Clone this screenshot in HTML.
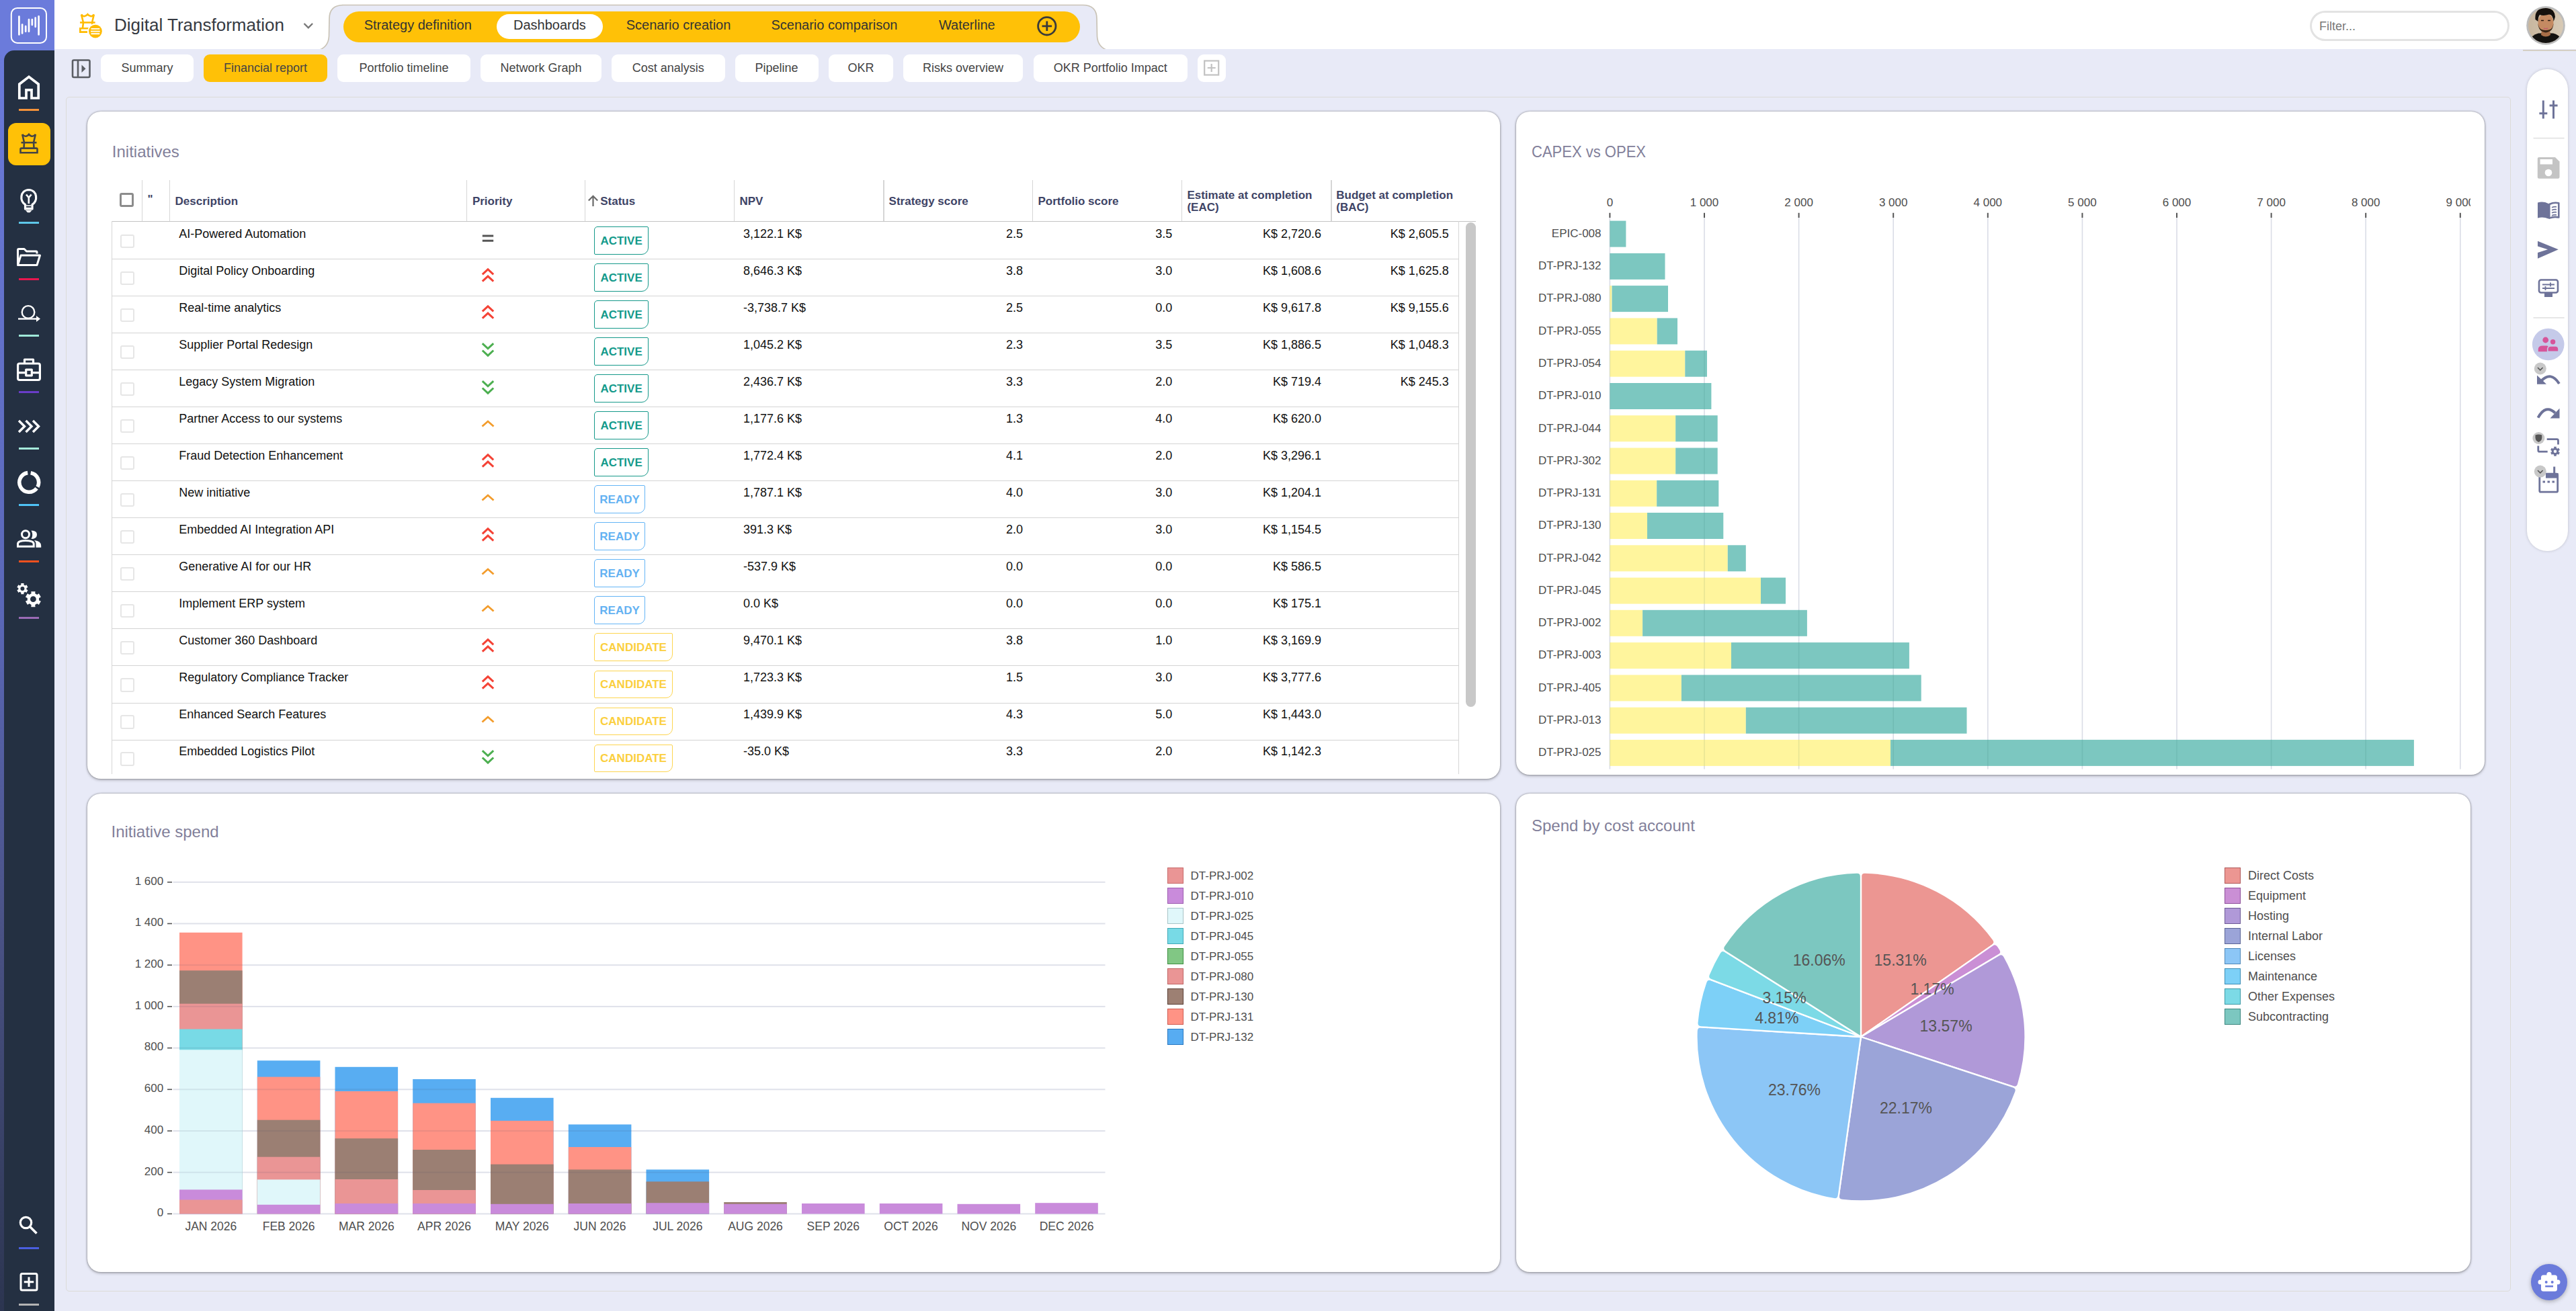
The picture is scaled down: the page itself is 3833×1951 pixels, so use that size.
<!DOCTYPE html><html><head><meta charset="utf-8"><style>
*{box-sizing:border-box;margin:0;padding:0}
html,body{width:3833px;height:1951px}
body{background:#e8eaf7;font-family:"Liberation Sans",sans-serif;color:#333}
#root{position:relative;width:3833px;height:1951px;overflow:hidden;background:#e8eaf7}
.a{position:absolute}
.t{position:absolute;white-space:nowrap;line-height:1}
.panel{position:absolute;background:#fff;border-radius:20px;box-shadow:0 0 3px rgba(0,0,0,.42),0 2px 4px rgba(0,0,0,.22)}
svg{position:absolute;overflow:visible}
</style></head><body><div id="root"><div class="a" style="left:81.0px;top:0.0px;width:3752.0px;height:73.0px;background:#fff"></div>
<svg style="left:0;top:0" width="3833" height="80"><path d="M476,74 C486,70 489,62 489.5,54 L490,28 Q490,7.5 511,7.5 L1611,7.5 Q1632,7.5 1632,28 L1632.5,54 C1633,62 1636,70 1646,74 Z" fill="#e8eaf7" stroke="#c9c3b6" stroke-width="1.7"/><rect x="470" y="73" width="1180" height="6" fill="#e8eaf7"/></svg>
<div class="a" style="left:510.6px;top:17.0px;width:1096.4px;height:45.5px;background:#ffc107;border-radius:23px"></div>
<div class="a" style="left:738.7px;top:21.2px;width:158.3px;height:36.8px;background:#fff;border-radius:18.5px"></div>
<div class="t" style="left:541.7px;top:27.3px;font-size:20px;color:#333;font-weight:400;">Strategy definition</div>
<div class="t" style="left:764.0px;top:27.3px;font-size:20px;color:#333;font-weight:400;">Dashboards</div>
<div class="t" style="left:931.7px;top:27.3px;font-size:20px;color:#333;font-weight:400;">Scenario creation</div>
<div class="t" style="left:1147.5px;top:27.3px;font-size:20px;color:#333;font-weight:400;">Scenario comparison</div>
<div class="t" style="left:1396.9px;top:27.3px;font-size:20px;color:#333;font-weight:400;">Waterline</div>
<svg style="left:1540px;top:21px" width="36" height="36"><circle cx="17.8" cy="17.8" r="13.2" fill="none" stroke="#3a3a3a" stroke-width="2.8"/><path d="M17.8,10.5V25.1M10.5,17.8H25.1" stroke="#3a3a3a" stroke-width="2.8"/></svg>
<svg style="left:110px;top:15px" width="50" height="50"><g fill="none" stroke="#ffbb00" stroke-width="2.6"><path d="M11,6.6 Q13.5,10 16,9 Q19,8.2 20.4,6.4 Q21.8,8.2 24.8,9 Q27.3,10 29.8,6.6 L27,18.5 L27.8,25"/><path d="M11,6.6 L14,18.5 L13,26.5"/><path d="M9,18.5 H31.6"/><path d="M22,27.3 H9.3 V32.6 H20"/></g><circle cx="31.9" cy="31.6" r="11.6" fill="#fff"/><circle cx="31.9" cy="31.6" r="9.9" fill="#ffbb00"/><path d="M25.5,27.9H38.3M25,31.6H38.8M25.5,35.3H38.3" stroke="#fff" stroke-width="1.9"/></svg>
<div class="t" style="left:170.0px;top:23.6px;font-size:26px;color:#363a42;font-weight:400;">Digital Transformation</div>
<svg style="left:448px;top:30px" width="22" height="16"><path d="M4.5,5 L10.8,11.3 L17.1,5" fill="none" stroke="#777" stroke-width="2.4"/></svg>
<div class="a" style="left:3436.5px;top:16.0px;width:297.9px;height:44.6px;background:#fff;border:3px solid #e3e3e3;border-radius:23px"></div>
<div class="t" style="left:3451.0px;top:29.8px;font-size:18px;color:#777;font-weight:400;">Filter...</div>
<svg style="left:3755px;top:5px" width="66" height="66"><defs><clipPath id="avc"><circle cx="33" cy="33" r="26"/></clipPath><linearGradient id="avg" x1="0" x2="1"><stop offset="0" stop-color="#c6b49c"/><stop offset="1" stop-color="#d9ccb8"/></linearGradient></defs><circle cx="33" cy="33" r="28.8" fill="#bcbcbc"/><g clip-path="url(#avc)"><rect x="0" y="0" width="66" height="66" fill="url(#avg)"/><path d="M4,66 Q8,48 22,44.5 L44,44.5 Q58,48 62,66 Z" fill="#141210"/><path d="M27,40 H39 L40,47 Q33,52 26,47Z" fill="#a86e48"/><ellipse cx="33" cy="29" rx="11.5" ry="14" fill="#c48a62"/><path d="M21.5,30 Q22,42 33,43.5 Q44,42 44.5,30 Q43,38 39,39 Q33,41 27,39 Q23,38 21.5,30Z" fill="#3a2618"/><path d="M17.5,24 Q16,8 31,6.8 Q46,6 47,20 Q46,24 44.5,27 Q44,17 38,16.5 Q30,19 24,17 Q21.5,20 21.5,27 Z" fill="#16110d"/><path d="M26,25.5 H30 M36,25.5 H40" stroke="#2a1a10" stroke-width="1.4"/><path d="M30,37 Q33,38.5 36,37" stroke="#c0606a" stroke-width="1.6" fill="none"/></g></svg>
<div class="a" style="left:3753.5px;top:74.0px;width:79.5px;height:1.5px;background:#d5cfc4"></div>
<svg style="left:105px;top:86px" width="32" height="32"><rect x="3" y="3.5" width="25.5" height="25.5" rx="2" fill="none" stroke="#5b5e64" stroke-width="2.6"/><path d="M11,3.5V29" stroke="#5b5e64" stroke-width="2.6"/><path d="M16.5,10.5 L22.5,16.2 L16.5,22Z" fill="#5b5e64"/></svg>
<div class="a" style="left:150.0px;top:80.5px;width:138.0px;height:41.8px;background:#fff;border-radius:9px"></div>
<div class="t" style="left:-281.0px;width:1000px;text-align:center;top:92.0px;font-size:18px;color:#444;font-weight:400;">Summary</div>
<div class="a" style="left:303.0px;top:80.5px;width:184.0px;height:41.8px;background:#ffc107;border-radius:9px"></div>
<div class="t" style="left:-105.0px;width:1000px;text-align:center;top:92.0px;font-size:18px;color:#444;font-weight:400;">Financial report</div>
<div class="a" style="left:502.0px;top:80.5px;width:198.0px;height:41.8px;background:#fff;border-radius:9px"></div>
<div class="t" style="left:101.0px;width:1000px;text-align:center;top:92.0px;font-size:18px;color:#444;font-weight:400;">Portfolio timeline</div>
<div class="a" style="left:715.0px;top:80.5px;width:180.0px;height:41.8px;background:#fff;border-radius:9px"></div>
<div class="t" style="left:305.0px;width:1000px;text-align:center;top:92.0px;font-size:18px;color:#444;font-weight:400;">Network Graph</div>
<div class="a" style="left:910.0px;top:80.5px;width:168.6px;height:41.8px;background:#fff;border-radius:9px"></div>
<div class="t" style="left:494.3px;width:1000px;text-align:center;top:92.0px;font-size:18px;color:#444;font-weight:400;">Cost analysis</div>
<div class="a" style="left:1093.5px;top:80.5px;width:124.2px;height:41.8px;background:#fff;border-radius:9px"></div>
<div class="t" style="left:655.6px;width:1000px;text-align:center;top:92.0px;font-size:18px;color:#444;font-weight:400;">Pipeline</div>
<div class="a" style="left:1233.0px;top:80.5px;width:96.0px;height:41.8px;background:#fff;border-radius:9px"></div>
<div class="t" style="left:781.0px;width:1000px;text-align:center;top:92.0px;font-size:18px;color:#444;font-weight:400;">OKR</div>
<div class="a" style="left:1344.0px;top:80.5px;width:178.0px;height:41.8px;background:#fff;border-radius:9px"></div>
<div class="t" style="left:933.0px;width:1000px;text-align:center;top:92.0px;font-size:18px;color:#444;font-weight:400;">Risks overview</div>
<div class="a" style="left:1537.5px;top:80.5px;width:229.5px;height:41.8px;background:#fff;border-radius:9px"></div>
<div class="t" style="left:1152.2px;width:1000px;text-align:center;top:92.0px;font-size:18px;color:#444;font-weight:400;">OKR Portfolio Impact</div>
<div class="a" style="left:1782.0px;top:80.5px;width:42.0px;height:41.8px;background:#fff;border-radius:9px"></div>
<svg style="left:1788px;top:86px" width="30" height="30"><rect x="4.2" y="4.5" width="21" height="21" fill="none" stroke="#c2c2c2" stroke-width="2.2"/><path d="M14.7,9V21M8.7,15H20.7" stroke="#c2c2c2" stroke-width="2.2"/></svg>
<div class="a" style="left:97.5px;top:144.0px;width:3638.5px;height:1778.0px;border:1.5px solid #dcdbd8;border-radius:5px"></div>
<div class="a" style="left:0.0px;top:0.0px;width:81.0px;height:95.0px;background:#6b7bdb"></div>
<div class="a" style="left:0.0px;top:75.0px;width:30.0px;height:1876.0px;background:linear-gradient(#6b7bdb 0%,#5b68b8 44%,#4a5285 70%,#2c3550 100%)"></div>
<div class="a" style="left:6.0px;top:75.0px;width:75.0px;height:1876.0px;background:#243042;border-top-left-radius:15px"></div>
<svg style="left:0;top:0" width="81" height="75"><rect x="16.8" y="11.9" width="52.2" height="52" rx="9" fill="none" stroke="#fff" stroke-width="2"/><g stroke="#fff" stroke-width="2.7" stroke-linecap="round"><path d="M28.4,24.5V51.5M33.1,36.5V49.5M38.2,39V46.8M43,29V46.8M47.8,29V37M52.7,26.5V39.8M57.6,24.3V51.5"/></g></svg>
<div class="a" style="left:11.9px;top:182.9px;width:63.4px;height:62.8px;background:#ffc107;border-radius:12px"></div>
<svg style="left:0;top:0" width="81" height="1951"><path d="M28.8,146 V125.2 L43,114.3 L57.2,125.2 V146 H47 V133.8 H39 V146 Z" fill="none" stroke="#fff" stroke-width="3.7" stroke-linejoin="miter"/><g fill="none" stroke="#444" stroke-width="2.6"><path d="M33.2,200 Q36,203.5 39.5,202.5 Q42,201.5 43,200 Q44,201.5 46.5,202.5 Q50,203.5 52.8,200 L50,212 L50.5,220"/><path d="M33.2,200 L36,212 L35.5,220"/><path d="M31.5,212.2 H54.5"/><path d="M30.5,227.2 V222 Q30.5,220.6 32,220.6 H54 Q55.5,220.6 55.5,222 V227.2 Z"/></g><g fill="none" stroke="#fff" stroke-width="3.2"><path d="M37.5,304.5 C29,300 29.5,283 42.8,282.5 C56,283 56.5,300 48,304.5 V311 H37.5 Z" stroke-linejoin="round"/><path d="M39,289.5 L42.8,294 L46.6,289.5 M42.8,294 V303" stroke-width="2.6"/><path d="M39,306H46.5M39,309.5H46.5" stroke-width="1.6"/></g><path d="M38,313 H47.5 L44.5,316.3 H41 Z" fill="#fff"/><g fill="none" stroke="#fff" stroke-width="3" stroke-linejoin="round"><path d="M26.5,393.5 V372 Q26.5,370.5 28,370.5 H36 L39.5,374 H53.5 Q55,374 55,375.5 V377.5"/><path d="M26.5,394.5 L31,380 H59.5 L55,394.5 Z"/></g><g fill="none" stroke="#fff" stroke-width="2.4"><circle cx="42" cy="464.4" r="9.3"/><path d="M27,474.5 H56"/></g><path d="M54,470 L60,474.5 L54,479 Z" fill="#fff"/><g fill="none" stroke="#fff" stroke-width="3.2" stroke-linejoin="round"><rect x="26.6" y="541" width="32.8" height="24.5" rx="2.5"/><path d="M36.5,540.5 V535 H49.5 V540.5"/><path d="M26.6,554.7 H37.8 M48.3,554.7 H59.4"/><rect x="38.7" y="550.2" width="8.6" height="8.6"/></g><g fill="none" stroke="#fff" stroke-width="3.4"><path d="M28,626 L36.5,634.5 L28,643"/><path d="M38.5,626 L47,634.5 L38.5,643"/><path d="M49,626 L57.5,634.5 L49,643"/></g><path d="M45.70,703.72 A14.4,14.4 0 0,1 55.91,724.66" fill="none" stroke="#fff" stroke-width="5.6"/><path d="M54.55,726.77 A14.4,14.4 0 1,1 41.20,703.64" fill="none" stroke="#fff" stroke-width="5.6"/><g fill="none" stroke="#fff" stroke-width="3"><circle cx="38" cy="795.2" r="5.5"/><path d="M26.5,813.2 V809.5 Q26.5,804.5 38,804.5 Q50.2,804.5 50.2,809.5 V813.2 Z"/></g><path d="M46.5,789.5 Q55.5,789.5 55,796 Q54.5,802 46.5,802 Q50,796 46.5,789.5Z" fill="#fff"/><path d="M51,804 Q61,805 61.2,812 V814.7 H53.5 V810 Q53.5,806 51,804Z" fill="#fff"/><path d="M39.48,877.31 L41.51,878.27 L39.34,882.04 L37.49,880.76 L35.39,881.97 L35.57,884.21 L31.23,884.21 L31.41,881.97 L29.31,880.76 L27.46,882.04 L25.29,878.27 L27.32,877.31 L27.32,874.89 L25.29,873.93 L27.46,870.16 L29.31,871.44 L31.41,870.23 L31.23,867.99 L35.57,867.99 L35.39,870.23 L37.49,871.44 L39.34,870.16 L41.51,873.93 L39.48,874.89ZM36.40,876.10 A3.0,3.0 0 1,0 30.40,876.10 A3.0,3.0 0 1,0 36.40,876.10Z" fill="#fff" fill-rule="evenodd"/><path d="M58.03,893.42 L60.89,894.78 L57.81,900.11 L55.20,898.32 L52.23,900.03 L52.48,903.19 L46.32,903.19 L46.57,900.03 L43.60,898.32 L40.99,900.11 L37.91,894.78 L40.77,893.42 L40.77,889.98 L37.91,888.62 L40.99,883.29 L43.60,885.08 L46.57,883.37 L46.32,880.21 L52.48,880.21 L52.23,883.37 L55.20,885.08 L57.81,883.29 L60.89,888.62 L58.03,889.98ZM53.80,891.70 A4.4,4.4 0 1,0 45.00,891.70 A4.4,4.4 0 1,0 53.80,891.70Z" fill="#fff" fill-rule="evenodd"/><g fill="none" stroke="#fff" stroke-width="3.2"><circle cx="38.5" cy="1819.5" r="8.2"/><path d="M44.5,1825.5 L54.5,1835.5" stroke-width="3.6"/></g><g fill="none" stroke="#fff" stroke-width="3"><rect x="31" y="1895.5" width="24" height="24.5" rx="2"/><path d="M43,1900.5V1915M35.8,1907.8H50.2"/></g></svg>
<div class="a" style="left:28.0px;top:162.0px;width:30.2px;height:3.0px;background:#f5923a"></div>
<div class="a" style="left:28.0px;top:330.0px;width:30.2px;height:3.0px;background:#5ec6e8"></div>
<div class="a" style="left:28.0px;top:414.0px;width:30.2px;height:3.0px;background:#e8174f"></div>
<div class="a" style="left:28.0px;top:498.0px;width:30.2px;height:3.0px;background:#9fe8d8"></div>
<div class="a" style="left:28.0px;top:582.0px;width:30.2px;height:3.0px;background:#6a3dc8"></div>
<div class="a" style="left:28.0px;top:666.0px;width:30.2px;height:3.0px;background:#a5eadb"></div>
<div class="a" style="left:28.0px;top:750.0px;width:30.2px;height:3.0px;background:#4fc3f7"></div>
<div class="a" style="left:28.0px;top:834.0px;width:30.2px;height:3.0px;background:#f4511e"></div>
<div class="a" style="left:28.0px;top:918.0px;width:30.2px;height:3.0px;background:#9b6bb5"></div>
<div class="a" style="left:28.0px;top:1856.0px;width:30.2px;height:3.0px;background:#4a5fe0"></div>
<div class="a" style="left:28.0px;top:1940.0px;width:30.2px;height:3.0px;background:#b4b4b4"></div>
<div class="panel" style="left:130.3px;top:166px;width:2102px;height:993px"></div>
<div class="t" style="left:166.8px;top:213.6px;font-size:24px;color:#82809a;font-weight:400;">Initiatives</div>
<div class="a" style="left:210.6px;top:268.0px;width:1.5px;height:61.4px;background:#d6d6d6"></div>
<div class="a" style="left:251.8px;top:268.0px;width:1.5px;height:61.4px;background:#d6d6d6"></div>
<div class="a" style="left:693.6px;top:268.0px;width:1.5px;height:61.4px;background:#d6d6d6"></div>
<div class="a" style="left:869.9px;top:268.0px;width:1.5px;height:61.4px;background:#d6d6d6"></div>
<div class="a" style="left:1091.7px;top:268.0px;width:1.5px;height:61.4px;background:#d6d6d6"></div>
<div class="a" style="left:1314.0px;top:268.0px;width:1.5px;height:61.4px;background:#d6d6d6"></div>
<div class="a" style="left:1535.8px;top:268.0px;width:1.5px;height:61.4px;background:#d6d6d6"></div>
<div class="a" style="left:1757.7px;top:268.0px;width:1.5px;height:61.4px;background:#d6d6d6"></div>
<div class="a" style="left:1980.0px;top:268.0px;width:1.5px;height:61.4px;background:#d6d6d6"></div>
<div class="a" style="left:166.5px;top:329.0px;width:2029.5px;height:1.2px;background:#c4c4c4"></div>
<div class="a" style="left:178.0px;top:287.0px;width:21.0px;height:21.0px;border:3px solid #8c8c8c;border-radius:3px"></div>
<div class="t" style="left:219.5px;top:288.1px;font-size:17px;color:#3e4466;font-weight:700;">"</div>
<div class="t" style="left:260.6px;top:290.8px;font-size:17px;color:#3e4466;font-weight:700;">Description</div>
<div class="t" style="left:702.9px;top:290.8px;font-size:17px;color:#3e4466;font-weight:700;">Priority</div>
<svg style="left:872px;top:288px" width="22" height="22"><path d="M10.5,19V3.8M3.8,10.5L10.5,3.8L17.2,10.5" fill="none" stroke="#6a6a6a" stroke-width="2.2"/></svg>
<div class="t" style="left:893.2px;top:290.8px;font-size:17px;color:#3e4466;font-weight:700;">Status</div>
<div class="t" style="left:1100.4px;top:290.8px;font-size:17px;color:#3e4466;font-weight:700;">NPV</div>
<div class="t" style="left:1322.6px;top:290.8px;font-size:17px;color:#3e4466;font-weight:700;">Strategy score</div>
<div class="t" style="left:1544.5px;top:290.8px;font-size:17px;color:#3e4466;font-weight:700;">Portfolio score</div>
<div class="t" style="left:1766.4px;top:282.0px;font-size:17px;color:#3e4466;font-weight:700;">Estimate at completion</div>
<div class="t" style="left:1766.4px;top:300.0px;font-size:17px;color:#3e4466;font-weight:700;">(EAC)</div>
<div class="t" style="left:1988.3px;top:282.0px;font-size:17px;color:#3e4466;font-weight:700;">Budget at completion</div>
<div class="t" style="left:1988.3px;top:300.0px;font-size:17px;color:#3e4466;font-weight:700;">(BAC)</div>
<div class="a" style="left:165.8px;top:329.4px;width:1.5px;height:822.2px;background:#d6d6d6"></div>
<div class="a" style="left:2169.8px;top:329.4px;width:1.5px;height:822.2px;background:#d6d6d6"></div>
<div class="a" style="left:166.5px;top:330.4px;width:2004px;height:821px;overflow:hidden">
<div class="a" style="left:0;top:54.6px;width:2004px;height:1px;background:#d4d4d4"></div>
<div class="a" style="left:12.5px;top:18.4px;width:20.5px;height:20.2px;border:2.5px solid #e6e6e6;border-radius:3px"></div>
<div class="t" style="left:99.7px;top:8.4px;font-size:18px;color:#111;font-weight:400;">AI-Powered Automation</div>
<svg style="left:549.5px;top:14.0px" width="20" height="20"><path d="M1.8,7H18.2M1.8,14.2H18.2" stroke="#555" stroke-width="3"/></svg>
<div class="a" style="left:717.5px;top:6.6px;width:81.3px;height:41.8px;border:1.8px solid #15998a;border-radius:5px 2px 10px 2px"></div>
<div class="t" style="left:258.1px;width:1000px;text-align:center;top:19.4px;font-size:17px;color:#139a8b;font-weight:700;">ACTIVE</div>
<div class="t" style="left:939.5px;top:8.4px;font-size:18px;color:#111;font-weight:400;">3,122.1 K$</div>
<div class="t" style="left:355.5px;width:1000px;text-align:right;top:8.4px;font-size:18px;color:#111;font-weight:400;">2.5</div>
<div class="t" style="left:577.7px;width:1000px;text-align:right;top:8.4px;font-size:18px;color:#111;font-weight:400;">3.5</div>
<div class="t" style="left:799.5px;width:1000px;text-align:right;top:8.4px;font-size:18px;color:#111;font-weight:400;">K$ 2,720.6</div>
<div class="t" style="left:989.3px;width:1000px;text-align:right;top:8.4px;font-size:18px;color:#111;font-weight:400;">K$ 2,605.5</div>
<div class="a" style="left:0;top:109.6px;width:2004px;height:1px;background:#d4d4d4"></div>
<div class="a" style="left:12.5px;top:73.4px;width:20.5px;height:20.2px;border:2.5px solid #e6e6e6;border-radius:3px"></div>
<div class="t" style="left:99.7px;top:63.4px;font-size:18px;color:#111;font-weight:400;">Digital Policy Onboarding</div>
<svg style="left:549.5px;top:69.1px" width="20" height="24"><path d="M1.8,9.4L10,1.8L18.2,9.4M1.8,19.7L10,12.1L18.2,19.7" fill="none" stroke="#f44336" stroke-width="3"/></svg>
<div class="a" style="left:717.5px;top:61.7px;width:81.3px;height:41.8px;border:1.8px solid #15998a;border-radius:5px 2px 10px 2px"></div>
<div class="t" style="left:258.1px;width:1000px;text-align:center;top:74.5px;font-size:17px;color:#139a8b;font-weight:700;">ACTIVE</div>
<div class="t" style="left:939.5px;top:63.4px;font-size:18px;color:#111;font-weight:400;">8,646.3 K$</div>
<div class="t" style="left:355.5px;width:1000px;text-align:right;top:63.4px;font-size:18px;color:#111;font-weight:400;">3.8</div>
<div class="t" style="left:577.7px;width:1000px;text-align:right;top:63.4px;font-size:18px;color:#111;font-weight:400;">3.0</div>
<div class="t" style="left:799.5px;width:1000px;text-align:right;top:63.4px;font-size:18px;color:#111;font-weight:400;">K$ 1,608.6</div>
<div class="t" style="left:989.3px;width:1000px;text-align:right;top:63.4px;font-size:18px;color:#111;font-weight:400;">K$ 1,625.8</div>
<div class="a" style="left:0;top:164.6px;width:2004px;height:1px;background:#d4d4d4"></div>
<div class="a" style="left:12.5px;top:128.5px;width:20.5px;height:20.2px;border:2.5px solid #e6e6e6;border-radius:3px"></div>
<div class="t" style="left:99.7px;top:118.5px;font-size:18px;color:#111;font-weight:400;">Real-time analytics</div>
<svg style="left:549.5px;top:124.1px" width="20" height="24"><path d="M1.8,9.4L10,1.8L18.2,9.4M1.8,19.7L10,12.1L18.2,19.7" fill="none" stroke="#f44336" stroke-width="3"/></svg>
<div class="a" style="left:717.5px;top:116.7px;width:81.3px;height:41.8px;border:1.8px solid #15998a;border-radius:5px 2px 10px 2px"></div>
<div class="t" style="left:258.1px;width:1000px;text-align:center;top:129.5px;font-size:17px;color:#139a8b;font-weight:700;">ACTIVE</div>
<div class="t" style="left:939.5px;top:118.5px;font-size:18px;color:#111;font-weight:400;">-3,738.7 K$</div>
<div class="t" style="left:355.5px;width:1000px;text-align:right;top:118.5px;font-size:18px;color:#111;font-weight:400;">2.5</div>
<div class="t" style="left:577.7px;width:1000px;text-align:right;top:118.5px;font-size:18px;color:#111;font-weight:400;">0.0</div>
<div class="t" style="left:799.5px;width:1000px;text-align:right;top:118.5px;font-size:18px;color:#111;font-weight:400;">K$ 9,617.8</div>
<div class="t" style="left:989.3px;width:1000px;text-align:right;top:118.5px;font-size:18px;color:#111;font-weight:400;">K$ 9,155.6</div>
<div class="a" style="left:0;top:219.6px;width:2004px;height:1px;background:#d4d4d4"></div>
<div class="a" style="left:12.5px;top:183.5px;width:20.5px;height:20.2px;border:2.5px solid #e6e6e6;border-radius:3px"></div>
<div class="t" style="left:99.7px;top:173.5px;font-size:18px;color:#111;font-weight:400;">Supplier Portal Redesign</div>
<svg style="left:549.5px;top:179.1px" width="20" height="24"><path d="M1.8,2.2L10,9.8L18.2,2.2M1.8,12.5L10,20.1L18.2,12.5" fill="none" stroke="#4caf50" stroke-width="3"/></svg>
<div class="a" style="left:717.5px;top:171.8px;width:81.3px;height:41.8px;border:1.8px solid #15998a;border-radius:5px 2px 10px 2px"></div>
<div class="t" style="left:258.1px;width:1000px;text-align:center;top:184.6px;font-size:17px;color:#139a8b;font-weight:700;">ACTIVE</div>
<div class="t" style="left:939.5px;top:173.5px;font-size:18px;color:#111;font-weight:400;">1,045.2 K$</div>
<div class="t" style="left:355.5px;width:1000px;text-align:right;top:173.5px;font-size:18px;color:#111;font-weight:400;">2.3</div>
<div class="t" style="left:577.7px;width:1000px;text-align:right;top:173.5px;font-size:18px;color:#111;font-weight:400;">3.5</div>
<div class="t" style="left:799.5px;width:1000px;text-align:right;top:173.5px;font-size:18px;color:#111;font-weight:400;">K$ 1,886.5</div>
<div class="t" style="left:989.3px;width:1000px;text-align:right;top:173.5px;font-size:18px;color:#111;font-weight:400;">K$ 1,048.3</div>
<div class="a" style="left:0;top:274.6px;width:2004px;height:1px;background:#d4d4d4"></div>
<div class="a" style="left:12.5px;top:238.6px;width:20.5px;height:20.2px;border:2.5px solid #e6e6e6;border-radius:3px"></div>
<div class="t" style="left:99.7px;top:228.6px;font-size:18px;color:#111;font-weight:400;">Legacy System Migration</div>
<svg style="left:549.5px;top:234.2px" width="20" height="24"><path d="M1.8,2.2L10,9.8L18.2,2.2M1.8,12.5L10,20.1L18.2,12.5" fill="none" stroke="#4caf50" stroke-width="3"/></svg>
<div class="a" style="left:717.5px;top:226.8px;width:81.3px;height:41.8px;border:1.8px solid #15998a;border-radius:5px 2px 10px 2px"></div>
<div class="t" style="left:258.1px;width:1000px;text-align:center;top:239.6px;font-size:17px;color:#139a8b;font-weight:700;">ACTIVE</div>
<div class="t" style="left:939.5px;top:228.6px;font-size:18px;color:#111;font-weight:400;">2,436.7 K$</div>
<div class="t" style="left:355.5px;width:1000px;text-align:right;top:228.6px;font-size:18px;color:#111;font-weight:400;">3.3</div>
<div class="t" style="left:577.7px;width:1000px;text-align:right;top:228.6px;font-size:18px;color:#111;font-weight:400;">2.0</div>
<div class="t" style="left:799.5px;width:1000px;text-align:right;top:228.6px;font-size:18px;color:#111;font-weight:400;">K$ 719.4</div>
<div class="t" style="left:989.3px;width:1000px;text-align:right;top:228.6px;font-size:18px;color:#111;font-weight:400;">K$ 245.3</div>
<div class="a" style="left:0;top:329.6px;width:2004px;height:1px;background:#d4d4d4"></div>
<div class="a" style="left:12.5px;top:293.6px;width:20.5px;height:20.2px;border:2.5px solid #e6e6e6;border-radius:3px"></div>
<div class="t" style="left:99.7px;top:283.6px;font-size:18px;color:#111;font-weight:400;">Partner Access to our systems</div>
<svg style="left:549.5px;top:289.2px" width="20" height="24"><path d="M1.5,14.5L10,7L18.5,14.5" fill="none" stroke="#f39c2b" stroke-width="2.8"/></svg>
<div class="a" style="left:717.5px;top:281.9px;width:81.3px;height:41.8px;border:1.8px solid #15998a;border-radius:5px 2px 10px 2px"></div>
<div class="t" style="left:258.1px;width:1000px;text-align:center;top:294.7px;font-size:17px;color:#139a8b;font-weight:700;">ACTIVE</div>
<div class="t" style="left:939.5px;top:283.6px;font-size:18px;color:#111;font-weight:400;">1,177.6 K$</div>
<div class="t" style="left:355.5px;width:1000px;text-align:right;top:283.6px;font-size:18px;color:#111;font-weight:400;">1.3</div>
<div class="t" style="left:577.7px;width:1000px;text-align:right;top:283.6px;font-size:18px;color:#111;font-weight:400;">4.0</div>
<div class="t" style="left:799.5px;width:1000px;text-align:right;top:283.6px;font-size:18px;color:#111;font-weight:400;">K$ 620.0</div>
<div class="a" style="left:0;top:384.6px;width:2004px;height:1px;background:#d4d4d4"></div>
<div class="a" style="left:12.5px;top:348.7px;width:20.5px;height:20.2px;border:2.5px solid #e6e6e6;border-radius:3px"></div>
<div class="t" style="left:99.7px;top:338.7px;font-size:18px;color:#111;font-weight:400;">Fraud Detection Enhancement</div>
<svg style="left:549.5px;top:344.3px" width="20" height="24"><path d="M1.8,9.4L10,1.8L18.2,9.4M1.8,19.7L10,12.1L18.2,19.7" fill="none" stroke="#f44336" stroke-width="3"/></svg>
<div class="a" style="left:717.5px;top:336.9px;width:81.3px;height:41.8px;border:1.8px solid #15998a;border-radius:5px 2px 10px 2px"></div>
<div class="t" style="left:258.1px;width:1000px;text-align:center;top:349.7px;font-size:17px;color:#139a8b;font-weight:700;">ACTIVE</div>
<div class="t" style="left:939.5px;top:338.7px;font-size:18px;color:#111;font-weight:400;">1,772.4 K$</div>
<div class="t" style="left:355.5px;width:1000px;text-align:right;top:338.7px;font-size:18px;color:#111;font-weight:400;">4.1</div>
<div class="t" style="left:577.7px;width:1000px;text-align:right;top:338.7px;font-size:18px;color:#111;font-weight:400;">2.0</div>
<div class="t" style="left:799.5px;width:1000px;text-align:right;top:338.7px;font-size:18px;color:#111;font-weight:400;">K$ 3,296.1</div>
<div class="a" style="left:0;top:439.6px;width:2004px;height:1px;background:#d4d4d4"></div>
<div class="a" style="left:12.5px;top:403.8px;width:20.5px;height:20.2px;border:2.5px solid #e6e6e6;border-radius:3px"></div>
<div class="t" style="left:99.7px;top:393.7px;font-size:18px;color:#111;font-weight:400;">New initiative</div>
<svg style="left:549.5px;top:399.4px" width="20" height="24"><path d="M1.5,14.5L10,7L18.5,14.5" fill="none" stroke="#f39c2b" stroke-width="2.8"/></svg>
<div class="a" style="left:717.5px;top:392.0px;width:76.2px;height:41.8px;border:1.8px solid #64b5f6;border-radius:5px 2px 10px 2px"></div>
<div class="t" style="left:255.6px;width:1000px;text-align:center;top:404.8px;font-size:17px;color:#64b2f2;font-weight:700;">READY</div>
<div class="t" style="left:939.5px;top:393.7px;font-size:18px;color:#111;font-weight:400;">1,787.1 K$</div>
<div class="t" style="left:355.5px;width:1000px;text-align:right;top:393.7px;font-size:18px;color:#111;font-weight:400;">4.0</div>
<div class="t" style="left:577.7px;width:1000px;text-align:right;top:393.7px;font-size:18px;color:#111;font-weight:400;">3.0</div>
<div class="t" style="left:799.5px;width:1000px;text-align:right;top:393.7px;font-size:18px;color:#111;font-weight:400;">K$ 1,204.1</div>
<div class="a" style="left:0;top:494.6px;width:2004px;height:1px;background:#d4d4d4"></div>
<div class="a" style="left:12.5px;top:458.8px;width:20.5px;height:20.2px;border:2.5px solid #e6e6e6;border-radius:3px"></div>
<div class="t" style="left:99.7px;top:448.8px;font-size:18px;color:#111;font-weight:400;">Embedded AI Integration API</div>
<svg style="left:549.5px;top:454.4px" width="20" height="24"><path d="M1.8,9.4L10,1.8L18.2,9.4M1.8,19.7L10,12.1L18.2,19.7" fill="none" stroke="#f44336" stroke-width="3"/></svg>
<div class="a" style="left:717.5px;top:447.0px;width:76.2px;height:41.8px;border:1.8px solid #64b5f6;border-radius:5px 2px 10px 2px"></div>
<div class="t" style="left:255.6px;width:1000px;text-align:center;top:459.8px;font-size:17px;color:#64b2f2;font-weight:700;">READY</div>
<div class="t" style="left:939.5px;top:448.8px;font-size:18px;color:#111;font-weight:400;">391.3 K$</div>
<div class="t" style="left:355.5px;width:1000px;text-align:right;top:448.8px;font-size:18px;color:#111;font-weight:400;">2.0</div>
<div class="t" style="left:577.7px;width:1000px;text-align:right;top:448.8px;font-size:18px;color:#111;font-weight:400;">3.0</div>
<div class="t" style="left:799.5px;width:1000px;text-align:right;top:448.8px;font-size:18px;color:#111;font-weight:400;">K$ 1,154.5</div>
<div class="a" style="left:0;top:549.6px;width:2004px;height:1px;background:#d4d4d4"></div>
<div class="a" style="left:12.5px;top:513.8px;width:20.5px;height:20.2px;border:2.5px solid #e6e6e6;border-radius:3px"></div>
<div class="t" style="left:99.7px;top:503.8px;font-size:18px;color:#111;font-weight:400;">Generative AI for our HR</div>
<svg style="left:549.5px;top:509.4px" width="20" height="24"><path d="M1.5,14.5L10,7L18.5,14.5" fill="none" stroke="#f39c2b" stroke-width="2.8"/></svg>
<div class="a" style="left:717.5px;top:502.0px;width:76.2px;height:41.8px;border:1.8px solid #64b5f6;border-radius:5px 2px 10px 2px"></div>
<div class="t" style="left:255.6px;width:1000px;text-align:center;top:514.9px;font-size:17px;color:#64b2f2;font-weight:700;">READY</div>
<div class="t" style="left:939.5px;top:503.8px;font-size:18px;color:#111;font-weight:400;">-537.9 K$</div>
<div class="t" style="left:355.5px;width:1000px;text-align:right;top:503.8px;font-size:18px;color:#111;font-weight:400;">0.0</div>
<div class="t" style="left:577.7px;width:1000px;text-align:right;top:503.8px;font-size:18px;color:#111;font-weight:400;">0.0</div>
<div class="t" style="left:799.5px;width:1000px;text-align:right;top:503.8px;font-size:18px;color:#111;font-weight:400;">K$ 586.5</div>
<div class="a" style="left:0;top:604.6px;width:2004px;height:1px;background:#d4d4d4"></div>
<div class="a" style="left:12.5px;top:568.9px;width:20.5px;height:20.2px;border:2.5px solid #e6e6e6;border-radius:3px"></div>
<div class="t" style="left:99.7px;top:558.9px;font-size:18px;color:#111;font-weight:400;">Implement ERP system</div>
<svg style="left:549.5px;top:564.5px" width="20" height="24"><path d="M1.5,14.5L10,7L18.5,14.5" fill="none" stroke="#f39c2b" stroke-width="2.8"/></svg>
<div class="a" style="left:717.5px;top:557.1px;width:76.2px;height:41.8px;border:1.8px solid #64b5f6;border-radius:5px 2px 10px 2px"></div>
<div class="t" style="left:255.6px;width:1000px;text-align:center;top:569.9px;font-size:17px;color:#64b2f2;font-weight:700;">READY</div>
<div class="t" style="left:939.5px;top:558.9px;font-size:18px;color:#111;font-weight:400;">0.0 K$</div>
<div class="t" style="left:355.5px;width:1000px;text-align:right;top:558.9px;font-size:18px;color:#111;font-weight:400;">0.0</div>
<div class="t" style="left:577.7px;width:1000px;text-align:right;top:558.9px;font-size:18px;color:#111;font-weight:400;">0.0</div>
<div class="t" style="left:799.5px;width:1000px;text-align:right;top:558.9px;font-size:18px;color:#111;font-weight:400;">K$ 175.1</div>
<div class="a" style="left:0;top:659.6px;width:2004px;height:1px;background:#d4d4d4"></div>
<div class="a" style="left:12.5px;top:623.9px;width:20.5px;height:20.2px;border:2.5px solid #e6e6e6;border-radius:3px"></div>
<div class="t" style="left:99.7px;top:613.9px;font-size:18px;color:#111;font-weight:400;">Customer 360 Dashboard</div>
<svg style="left:549.5px;top:619.5px" width="20" height="24"><path d="M1.8,9.4L10,1.8L18.2,9.4M1.8,19.7L10,12.1L18.2,19.7" fill="none" stroke="#f44336" stroke-width="3"/></svg>
<div class="a" style="left:717.5px;top:612.1px;width:117px;height:41.8px;border:1.8px solid #fdd54f;border-radius:5px 2px 10px 2px"></div>
<div class="t" style="left:276.0px;width:1000px;text-align:center;top:625.0px;font-size:17px;color:#fbcf40;font-weight:700;">CANDIDATE</div>
<div class="t" style="left:939.5px;top:613.9px;font-size:18px;color:#111;font-weight:400;">9,470.1 K$</div>
<div class="t" style="left:355.5px;width:1000px;text-align:right;top:613.9px;font-size:18px;color:#111;font-weight:400;">3.8</div>
<div class="t" style="left:577.7px;width:1000px;text-align:right;top:613.9px;font-size:18px;color:#111;font-weight:400;">1.0</div>
<div class="t" style="left:799.5px;width:1000px;text-align:right;top:613.9px;font-size:18px;color:#111;font-weight:400;">K$ 3,169.9</div>
<div class="a" style="left:0;top:715.6px;width:2004px;height:1px;background:#d4d4d4"></div>
<div class="a" style="left:12.5px;top:679.0px;width:20.5px;height:20.2px;border:2.5px solid #e6e6e6;border-radius:3px"></div>
<div class="t" style="left:99.7px;top:669.0px;font-size:18px;color:#111;font-weight:400;">Regulatory Compliance Tracker</div>
<svg style="left:549.5px;top:674.6px" width="20" height="24"><path d="M1.8,9.4L10,1.8L18.2,9.4M1.8,19.7L10,12.1L18.2,19.7" fill="none" stroke="#f44336" stroke-width="3"/></svg>
<div class="a" style="left:717.5px;top:667.2px;width:117px;height:41.8px;border:1.8px solid #fdd54f;border-radius:5px 2px 10px 2px"></div>
<div class="t" style="left:276.0px;width:1000px;text-align:center;top:680.0px;font-size:17px;color:#fbcf40;font-weight:700;">CANDIDATE</div>
<div class="t" style="left:939.5px;top:669.0px;font-size:18px;color:#111;font-weight:400;">1,723.3 K$</div>
<div class="t" style="left:355.5px;width:1000px;text-align:right;top:669.0px;font-size:18px;color:#111;font-weight:400;">1.5</div>
<div class="t" style="left:577.7px;width:1000px;text-align:right;top:669.0px;font-size:18px;color:#111;font-weight:400;">3.0</div>
<div class="t" style="left:799.5px;width:1000px;text-align:right;top:669.0px;font-size:18px;color:#111;font-weight:400;">K$ 3,777.6</div>
<div class="a" style="left:0;top:770.6px;width:2004px;height:1px;background:#d4d4d4"></div>
<div class="a" style="left:12.5px;top:734.1px;width:20.5px;height:20.2px;border:2.5px solid #e6e6e6;border-radius:3px"></div>
<div class="t" style="left:99.7px;top:724.0px;font-size:18px;color:#111;font-weight:400;">Enhanced Search Features</div>
<svg style="left:549.5px;top:729.6px" width="20" height="24"><path d="M1.5,14.5L10,7L18.5,14.5" fill="none" stroke="#f39c2b" stroke-width="2.8"/></svg>
<div class="a" style="left:717.5px;top:722.2px;width:117px;height:41.8px;border:1.8px solid #fdd54f;border-radius:5px 2px 10px 2px"></div>
<div class="t" style="left:276.0px;width:1000px;text-align:center;top:735.1px;font-size:17px;color:#fbcf40;font-weight:700;">CANDIDATE</div>
<div class="t" style="left:939.5px;top:724.0px;font-size:18px;color:#111;font-weight:400;">1,439.9 K$</div>
<div class="t" style="left:355.5px;width:1000px;text-align:right;top:724.0px;font-size:18px;color:#111;font-weight:400;">4.3</div>
<div class="t" style="left:577.7px;width:1000px;text-align:right;top:724.0px;font-size:18px;color:#111;font-weight:400;">5.0</div>
<div class="t" style="left:799.5px;width:1000px;text-align:right;top:724.0px;font-size:18px;color:#111;font-weight:400;">K$ 1,443.0</div>
<div class="a" style="left:12.5px;top:789.1px;width:20.5px;height:20.2px;border:2.5px solid #e6e6e6;border-radius:3px"></div>
<div class="t" style="left:99.7px;top:779.1px;font-size:18px;color:#111;font-weight:400;">Embedded Logistics Pilot</div>
<svg style="left:549.5px;top:784.7px" width="20" height="24"><path d="M1.8,2.2L10,9.8L18.2,2.2M1.8,12.5L10,20.1L18.2,12.5" fill="none" stroke="#4caf50" stroke-width="3"/></svg>
<div class="a" style="left:717.5px;top:777.3px;width:117px;height:41.8px;border:1.8px solid #fdd54f;border-radius:5px 2px 10px 2px"></div>
<div class="t" style="left:276.0px;width:1000px;text-align:center;top:790.1px;font-size:17px;color:#fbcf40;font-weight:700;">CANDIDATE</div>
<div class="t" style="left:939.5px;top:779.1px;font-size:18px;color:#111;font-weight:400;">-35.0 K$</div>
<div class="t" style="left:355.5px;width:1000px;text-align:right;top:779.1px;font-size:18px;color:#111;font-weight:400;">3.3</div>
<div class="t" style="left:577.7px;width:1000px;text-align:right;top:779.1px;font-size:18px;color:#111;font-weight:400;">2.0</div>
<div class="t" style="left:799.5px;width:1000px;text-align:right;top:779.1px;font-size:18px;color:#111;font-weight:400;">K$ 1,142.3</div>
</div>
<div class="a" style="left:2181.0px;top:331.0px;width:15.0px;height:721.2px;background:#c8c8c8;border-radius:8px"></div>
<div class="panel" style="left:2255.6px;top:166px;width:1441px;height:987px"></div>
<div class="t" style="left:2279.3px;top:213.6px;font-size:24px;color:#82809a;font-weight:400;transform:scaleX(0.917);transform-origin:0 0">CAPEX vs OPEX</div>
<svg style="left:0;top:0" width="3833" height="1951"><defs><clipPath id="cbar"><rect x="2395.4" y="328.6" width="24.0" height="39"/><rect x="2395.4" y="376.9" width="82.1" height="39"/><rect x="2395.4" y="425.1" width="86.6" height="39"/><rect x="2395.4" y="473.4" width="100.6" height="39"/><rect x="2395.4" y="521.7" width="144.6" height="39"/><rect x="2395.4" y="570.0" width="151.0" height="39"/><rect x="2395.4" y="618.2" width="160.3" height="39"/><rect x="2395.4" y="666.5" width="160.3" height="39"/><rect x="2395.4" y="714.8" width="161.9" height="39"/><rect x="2395.4" y="763.0" width="168.9" height="39"/><rect x="2395.4" y="811.3" width="202.4" height="39"/><rect x="2395.4" y="859.6" width="261.6" height="39"/><rect x="2395.4" y="907.8" width="293.5" height="39"/><rect x="2395.4" y="956.1" width="445.5" height="39"/><rect x="2395.4" y="1004.4" width="463.3" height="39"/><rect x="2395.4" y="1052.7" width="531.1" height="39"/><rect x="2395.4" y="1100.9" width="1196.5" height="39"/></clipPath></defs><rect x="2394.6" y="324" width="1.6" height="820.6" fill="#dadde6"/><rect x="2394.4" y="316.8" width="2" height="7.2" fill="#555"/><rect x="2535.2" y="324" width="1.6" height="820.6" fill="#dadde6"/><rect x="2535.0" y="316.8" width="2" height="7.2" fill="#555"/><rect x="2675.8" y="324" width="1.6" height="820.6" fill="#dadde6"/><rect x="2675.6" y="316.8" width="2" height="7.2" fill="#555"/><rect x="2816.4" y="324" width="1.6" height="820.6" fill="#dadde6"/><rect x="2816.2" y="316.8" width="2" height="7.2" fill="#555"/><rect x="2957.0" y="324" width="1.6" height="820.6" fill="#dadde6"/><rect x="2956.8" y="316.8" width="2" height="7.2" fill="#555"/><rect x="3097.6" y="324" width="1.6" height="820.6" fill="#dadde6"/><rect x="3097.4" y="316.8" width="2" height="7.2" fill="#555"/><rect x="3238.2" y="324" width="1.6" height="820.6" fill="#dadde6"/><rect x="3238.0" y="316.8" width="2" height="7.2" fill="#555"/><rect x="3378.8" y="324" width="1.6" height="820.6" fill="#dadde6"/><rect x="3378.6" y="316.8" width="2" height="7.2" fill="#555"/><rect x="3519.4" y="324" width="1.6" height="820.6" fill="#dadde6"/><rect x="3519.2" y="316.8" width="2" height="7.2" fill="#555"/><rect x="3660.0" y="324" width="1.6" height="820.6" fill="#dadde6"/><rect x="3659.8" y="316.8" width="2" height="7.2" fill="#555"/><rect x="2395.4" y="328.6" width="24.0" height="39" fill="#7cc7c0"/><rect x="2395.4" y="376.9" width="82.1" height="39" fill="#7cc7c0"/><rect x="2395.4" y="425.1" width="3.1" height="39" fill="#fff59d"/><rect x="2398.5" y="425.1" width="83.5" height="39" fill="#7cc7c0"/><rect x="2395.4" y="473.4" width="70.3" height="39" fill="#fff59d"/><rect x="2465.7" y="473.4" width="30.3" height="39" fill="#7cc7c0"/><rect x="2395.4" y="521.7" width="111.9" height="39" fill="#fff59d"/><rect x="2507.3" y="521.7" width="32.7" height="39" fill="#7cc7c0"/><rect x="2395.4" y="570.0" width="151.0" height="39" fill="#7cc7c0"/><rect x="2395.4" y="618.2" width="97.8" height="39" fill="#fff59d"/><rect x="2493.2" y="618.2" width="62.5" height="39" fill="#7cc7c0"/><rect x="2395.4" y="666.5" width="97.8" height="39" fill="#fff59d"/><rect x="2493.2" y="666.5" width="62.5" height="39" fill="#7cc7c0"/><rect x="2395.4" y="714.8" width="69.8" height="39" fill="#fff59d"/><rect x="2465.2" y="714.8" width="92.1" height="39" fill="#7cc7c0"/><rect x="2395.4" y="763.0" width="55.6" height="39" fill="#fff59d"/><rect x="2451.0" y="763.0" width="113.3" height="39" fill="#7cc7c0"/><rect x="2395.4" y="811.3" width="175.4" height="39" fill="#fff59d"/><rect x="2570.8" y="811.3" width="27.0" height="39" fill="#7cc7c0"/><rect x="2395.4" y="859.6" width="224.6" height="39" fill="#fff59d"/><rect x="2620.0" y="859.6" width="37.0" height="39" fill="#7cc7c0"/><rect x="2395.4" y="907.8" width="48.7" height="39" fill="#fff59d"/><rect x="2444.1" y="907.8" width="244.8" height="39" fill="#7cc7c0"/><rect x="2395.4" y="956.1" width="180.6" height="39" fill="#fff59d"/><rect x="2576.0" y="956.1" width="264.9" height="39" fill="#7cc7c0"/><rect x="2395.4" y="1004.4" width="106.5" height="39" fill="#fff59d"/><rect x="2501.9" y="1004.4" width="356.8" height="39" fill="#7cc7c0"/><rect x="2395.4" y="1052.7" width="202.4" height="39" fill="#fff59d"/><rect x="2597.8" y="1052.7" width="328.7" height="39" fill="#7cc7c0"/><rect x="2395.4" y="1100.9" width="417.6" height="39" fill="#fff59d"/><rect x="2813.0" y="1100.9" width="778.9" height="39" fill="#7cc7c0"/><g clip-path="url(#cbar)"><rect x="2394.6" y="324" width="1.6" height="820.6" fill="rgba(20,90,80,.10)"/><rect x="2535.2" y="324" width="1.6" height="820.6" fill="rgba(20,90,80,.10)"/><rect x="2675.8" y="324" width="1.6" height="820.6" fill="rgba(20,90,80,.10)"/><rect x="2816.4" y="324" width="1.6" height="820.6" fill="rgba(20,90,80,.10)"/><rect x="2957.0" y="324" width="1.6" height="820.6" fill="rgba(20,90,80,.10)"/><rect x="3097.6" y="324" width="1.6" height="820.6" fill="rgba(20,90,80,.10)"/><rect x="3238.2" y="324" width="1.6" height="820.6" fill="rgba(20,90,80,.10)"/><rect x="3378.8" y="324" width="1.6" height="820.6" fill="rgba(20,90,80,.10)"/><rect x="3519.4" y="324" width="1.6" height="820.6" fill="rgba(20,90,80,.10)"/><rect x="3660.0" y="324" width="1.6" height="820.6" fill="rgba(20,90,80,.10)"/></g></svg>
<div class="t" style="left:1895.4px;width:1000px;text-align:center;top:293.4px;font-size:17px;color:#4e4e4e;font-weight:400;">0</div>
<div class="t" style="left:2036.0px;width:1000px;text-align:center;top:293.4px;font-size:17px;color:#4e4e4e;font-weight:400;">1 000</div>
<div class="t" style="left:2176.6px;width:1000px;text-align:center;top:293.4px;font-size:17px;color:#4e4e4e;font-weight:400;">2 000</div>
<div class="t" style="left:2317.2px;width:1000px;text-align:center;top:293.4px;font-size:17px;color:#4e4e4e;font-weight:400;">3 000</div>
<div class="t" style="left:2457.8px;width:1000px;text-align:center;top:293.4px;font-size:17px;color:#4e4e4e;font-weight:400;">4 000</div>
<div class="t" style="left:2598.4px;width:1000px;text-align:center;top:293.4px;font-size:17px;color:#4e4e4e;font-weight:400;">5 000</div>
<div class="t" style="left:2739.0px;width:1000px;text-align:center;top:293.4px;font-size:17px;color:#4e4e4e;font-weight:400;">6 000</div>
<div class="t" style="left:2879.6px;width:1000px;text-align:center;top:293.4px;font-size:17px;color:#4e4e4e;font-weight:400;">7 000</div>
<div class="t" style="left:3020.2px;width:1000px;text-align:center;top:293.4px;font-size:17px;color:#4e4e4e;font-weight:400;">8 000</div>
<div class="a" style="left:3600px;top:280px;width:76px;height:40px;overflow:hidden"><div class="t" style="left:-439.2px;width:1000px;text-align:center;top:13.4px;font-size:17px;color:#4e4e4e">9 000</div></div>
<div class="t" style="left:1382.5px;width:1000px;text-align:right;top:338.9px;font-size:17px;color:#4e4e4e;font-weight:400;">EPIC-008</div>
<div class="t" style="left:1382.5px;width:1000px;text-align:right;top:387.2px;font-size:17px;color:#4e4e4e;font-weight:400;">DT-PRJ-132</div>
<div class="t" style="left:1382.5px;width:1000px;text-align:right;top:435.4px;font-size:17px;color:#4e4e4e;font-weight:400;">DT-PRJ-080</div>
<div class="t" style="left:1382.5px;width:1000px;text-align:right;top:483.7px;font-size:17px;color:#4e4e4e;font-weight:400;">DT-PRJ-055</div>
<div class="t" style="left:1382.5px;width:1000px;text-align:right;top:532.0px;font-size:17px;color:#4e4e4e;font-weight:400;">DT-PRJ-054</div>
<div class="t" style="left:1382.5px;width:1000px;text-align:right;top:580.3px;font-size:17px;color:#4e4e4e;font-weight:400;">DT-PRJ-010</div>
<div class="t" style="left:1382.5px;width:1000px;text-align:right;top:628.5px;font-size:17px;color:#4e4e4e;font-weight:400;">DT-PRJ-044</div>
<div class="t" style="left:1382.5px;width:1000px;text-align:right;top:676.8px;font-size:17px;color:#4e4e4e;font-weight:400;">DT-PRJ-302</div>
<div class="t" style="left:1382.5px;width:1000px;text-align:right;top:725.1px;font-size:17px;color:#4e4e4e;font-weight:400;">DT-PRJ-131</div>
<div class="t" style="left:1382.5px;width:1000px;text-align:right;top:773.3px;font-size:17px;color:#4e4e4e;font-weight:400;">DT-PRJ-130</div>
<div class="t" style="left:1382.5px;width:1000px;text-align:right;top:821.6px;font-size:17px;color:#4e4e4e;font-weight:400;">DT-PRJ-042</div>
<div class="t" style="left:1382.5px;width:1000px;text-align:right;top:869.9px;font-size:17px;color:#4e4e4e;font-weight:400;">DT-PRJ-045</div>
<div class="t" style="left:1382.5px;width:1000px;text-align:right;top:918.1px;font-size:17px;color:#4e4e4e;font-weight:400;">DT-PRJ-002</div>
<div class="t" style="left:1382.5px;width:1000px;text-align:right;top:966.4px;font-size:17px;color:#4e4e4e;font-weight:400;">DT-PRJ-003</div>
<div class="t" style="left:1382.5px;width:1000px;text-align:right;top:1014.7px;font-size:17px;color:#4e4e4e;font-weight:400;">DT-PRJ-405</div>
<div class="t" style="left:1382.5px;width:1000px;text-align:right;top:1063.0px;font-size:17px;color:#4e4e4e;font-weight:400;">DT-PRJ-013</div>
<div class="t" style="left:1382.5px;width:1000px;text-align:right;top:1111.2px;font-size:17px;color:#4e4e4e;font-weight:400;">DT-PRJ-025</div>
<div class="panel" style="left:130.3px;top:1181.3px;width:2102px;height:711.4px"></div>
<div class="t" style="left:165.5px;top:1226.2px;font-size:24px;color:#82809a;font-weight:400;">Initiative spend</div>
<svg style="left:0;top:0" width="3833" height="1951"><defs><clipPath id="sbar"><rect x="267.0" y="1387.8" width="93.6" height="418.6"/><rect x="382.8" y="1578.3" width="93.6" height="228.1"/><rect x="498.5" y="1587.8" width="93.6" height="218.6"/><rect x="614.2" y="1606.0" width="93.6" height="200.4"/><rect x="730.0" y="1633.8" width="93.6" height="172.6"/><rect x="845.8" y="1673.4" width="93.6" height="133.0"/><rect x="961.5" y="1740.5" width="93.6" height="65.9"/><rect x="1077.2" y="1789.0" width="93.6" height="17.4"/><rect x="1193.0" y="1791.0" width="93.6" height="15.4"/><rect x="1308.8" y="1791.0" width="93.6" height="15.4"/><rect x="1424.5" y="1791.8" width="93.6" height="14.6"/><rect x="1540.2" y="1790.2" width="93.6" height="16.2"/></clipPath></defs><rect x="257.5" y="1805.4" width="1387" height="2" fill="#dfe1ea"/><rect x="249" y="1805.6" width="7" height="1.6" fill="#555"/><rect x="257.5" y="1743.7" width="1387" height="2" fill="#dfe1ea"/><rect x="249" y="1743.9" width="7" height="1.6" fill="#555"/><rect x="257.5" y="1682.0" width="1387" height="2" fill="#dfe1ea"/><rect x="249" y="1682.2" width="7" height="1.6" fill="#555"/><rect x="257.5" y="1620.3" width="1387" height="2" fill="#dfe1ea"/><rect x="249" y="1620.5" width="7" height="1.6" fill="#555"/><rect x="257.5" y="1558.6" width="1387" height="2" fill="#dfe1ea"/><rect x="249" y="1558.8" width="7" height="1.6" fill="#555"/><rect x="257.5" y="1496.9" width="1387" height="2" fill="#dfe1ea"/><rect x="249" y="1497.1" width="7" height="1.6" fill="#555"/><rect x="257.5" y="1435.2" width="1387" height="2" fill="#dfe1ea"/><rect x="249" y="1435.4" width="7" height="1.6" fill="#555"/><rect x="257.5" y="1373.5" width="1387" height="2" fill="#dfe1ea"/><rect x="249" y="1373.7" width="7" height="1.6" fill="#555"/><rect x="257.5" y="1311.8" width="1387" height="2" fill="#dfe1ea"/><rect x="249" y="1312.0" width="7" height="1.6" fill="#555"/><rect x="267.0" y="1387.8" width="93.6" height="418.6" fill="#ff9385"/><rect x="267.0" y="1444.3" width="93.6" height="362.1" fill="#9b7f73"/><rect x="267.0" y="1493.7" width="93.6" height="312.7" fill="#ea9595"/><rect x="267.0" y="1531.5" width="93.6" height="274.9" fill="#78dae6"/><rect x="267.0" y="1562.3" width="93.6" height="244.1" fill="#e0f7fa"/><rect x="267.0" y="1770.4" width="93.6" height="36.0" fill="#c98bdb"/><rect x="267.0" y="1785.5" width="93.6" height="20.9" fill="#ea9595"/><rect x="382.8" y="1578.3" width="93.6" height="228.1" fill="#58adf2"/><rect x="382.8" y="1602.6" width="93.6" height="203.8" fill="#ff9385"/><rect x="382.8" y="1666.7" width="93.6" height="139.7" fill="#9b7f73"/><rect x="382.8" y="1721.7" width="93.6" height="84.7" fill="#ea9595"/><rect x="382.8" y="1755.4" width="93.6" height="51.0" fill="#e0f7fa"/><rect x="382.8" y="1792.8" width="93.6" height="13.6" fill="#c98bdb"/><rect x="498.5" y="1587.8" width="93.6" height="218.6" fill="#58adf2"/><rect x="498.5" y="1624.0" width="93.6" height="182.4" fill="#ff9385"/><rect x="498.5" y="1694.2" width="93.6" height="112.2" fill="#9b7f73"/><rect x="498.5" y="1755.0" width="93.6" height="51.4" fill="#ea9595"/><rect x="498.5" y="1791.0" width="93.6" height="15.4" fill="#c98bdb"/><rect x="614.2" y="1606.0" width="93.6" height="200.4" fill="#58adf2"/><rect x="614.2" y="1641.7" width="93.6" height="164.7" fill="#ff9385"/><rect x="614.2" y="1711.0" width="93.6" height="95.4" fill="#9b7f73"/><rect x="614.2" y="1771.0" width="93.6" height="35.4" fill="#ea9595"/><rect x="614.2" y="1791.0" width="93.6" height="15.4" fill="#c98bdb"/><rect x="730.0" y="1633.8" width="93.6" height="172.6" fill="#58adf2"/><rect x="730.0" y="1667.9" width="93.6" height="138.5" fill="#ff9385"/><rect x="730.0" y="1732.7" width="93.6" height="73.7" fill="#9b7f73"/><rect x="730.0" y="1791.8" width="93.6" height="14.6" fill="#c98bdb"/><rect x="845.8" y="1673.4" width="93.6" height="133.0" fill="#58adf2"/><rect x="845.8" y="1707.0" width="93.6" height="99.4" fill="#ff9385"/><rect x="845.8" y="1740.5" width="93.6" height="65.9" fill="#9b7f73"/><rect x="845.8" y="1791.0" width="93.6" height="15.4" fill="#c98bdb"/><rect x="961.5" y="1740.5" width="93.6" height="65.9" fill="#58adf2"/><rect x="961.5" y="1758.4" width="93.6" height="48.0" fill="#9b7f73"/><rect x="961.5" y="1790.2" width="93.6" height="16.2" fill="#c98bdb"/><rect x="1077.2" y="1789.0" width="93.6" height="17.4" fill="#9b7f73"/><rect x="1077.2" y="1791.8" width="93.6" height="14.6" fill="#c98bdb"/><rect x="1193.0" y="1791.0" width="93.6" height="15.4" fill="#c98bdb"/><rect x="1308.8" y="1791.0" width="93.6" height="15.4" fill="#c98bdb"/><rect x="1424.5" y="1791.8" width="93.6" height="14.6" fill="#c98bdb"/><rect x="1540.2" y="1790.2" width="93.6" height="16.2" fill="#c98bdb"/><g clip-path="url(#sbar)"><rect x="257.5" y="1743.7" width="1387" height="2" fill="rgba(60,70,100,.10)"/><rect x="257.5" y="1682.0" width="1387" height="2" fill="rgba(60,70,100,.10)"/><rect x="257.5" y="1620.3" width="1387" height="2" fill="rgba(60,70,100,.10)"/><rect x="257.5" y="1558.6" width="1387" height="2" fill="rgba(60,70,100,.10)"/><rect x="257.5" y="1496.9" width="1387" height="2" fill="rgba(60,70,100,.10)"/><rect x="257.5" y="1435.2" width="1387" height="2" fill="rgba(60,70,100,.10)"/><rect x="257.5" y="1373.5" width="1387" height="2" fill="rgba(60,70,100,.10)"/><rect x="257.5" y="1311.8" width="1387" height="2" fill="rgba(60,70,100,.10)"/></g></svg>
<div class="t" style="left:-756.8px;width:1000px;text-align:right;top:1796.2px;font-size:17px;color:#4e4e4e;font-weight:400;">0</div>
<div class="t" style="left:-756.8px;width:1000px;text-align:right;top:1734.5px;font-size:17px;color:#4e4e4e;font-weight:400;">200</div>
<div class="t" style="left:-756.8px;width:1000px;text-align:right;top:1672.8px;font-size:17px;color:#4e4e4e;font-weight:400;">400</div>
<div class="t" style="left:-756.8px;width:1000px;text-align:right;top:1611.1px;font-size:17px;color:#4e4e4e;font-weight:400;">600</div>
<div class="t" style="left:-756.8px;width:1000px;text-align:right;top:1549.4px;font-size:17px;color:#4e4e4e;font-weight:400;">800</div>
<div class="t" style="left:-756.8px;width:1000px;text-align:right;top:1487.7px;font-size:17px;color:#4e4e4e;font-weight:400;">1 000</div>
<div class="t" style="left:-756.8px;width:1000px;text-align:right;top:1426.0px;font-size:17px;color:#4e4e4e;font-weight:400;">1 200</div>
<div class="t" style="left:-756.8px;width:1000px;text-align:right;top:1364.3px;font-size:17px;color:#4e4e4e;font-weight:400;">1 400</div>
<div class="t" style="left:-756.8px;width:1000px;text-align:right;top:1302.6px;font-size:17px;color:#4e4e4e;font-weight:400;">1 600</div>
<div class="t" style="left:-186.2px;width:1000px;text-align:center;top:1817.0px;font-size:17.5px;color:#4e4e4e;font-weight:400;">JAN 2026</div>
<div class="t" style="left:-70.4px;width:1000px;text-align:center;top:1817.0px;font-size:17.5px;color:#4e4e4e;font-weight:400;">FEB 2026</div>
<div class="t" style="left:45.3px;width:1000px;text-align:center;top:1817.0px;font-size:17.5px;color:#4e4e4e;font-weight:400;">MAR 2026</div>
<div class="t" style="left:161.0px;width:1000px;text-align:center;top:1817.0px;font-size:17.5px;color:#4e4e4e;font-weight:400;">APR 2026</div>
<div class="t" style="left:276.8px;width:1000px;text-align:center;top:1817.0px;font-size:17.5px;color:#4e4e4e;font-weight:400;">MAY 2026</div>
<div class="t" style="left:392.5px;width:1000px;text-align:center;top:1817.0px;font-size:17.5px;color:#4e4e4e;font-weight:400;">JUN 2026</div>
<div class="t" style="left:508.3px;width:1000px;text-align:center;top:1817.0px;font-size:17.5px;color:#4e4e4e;font-weight:400;">JUL 2026</div>
<div class="t" style="left:624.0px;width:1000px;text-align:center;top:1817.0px;font-size:17.5px;color:#4e4e4e;font-weight:400;">AUG 2026</div>
<div class="t" style="left:739.8px;width:1000px;text-align:center;top:1817.0px;font-size:17.5px;color:#4e4e4e;font-weight:400;">SEP 2026</div>
<div class="t" style="left:855.5px;width:1000px;text-align:center;top:1817.0px;font-size:17.5px;color:#4e4e4e;font-weight:400;">OCT 2026</div>
<div class="t" style="left:971.3px;width:1000px;text-align:center;top:1817.0px;font-size:17.5px;color:#4e4e4e;font-weight:400;">NOV 2026</div>
<div class="t" style="left:1087.0px;width:1000px;text-align:center;top:1817.0px;font-size:17.5px;color:#4e4e4e;font-weight:400;">DEC 2026</div>
<div class="a" style="left:1737.0px;top:1291.3px;width:24.0px;height:23.5px;background:#ea9595;border:1.8px solid #c86a6a"></div>
<div class="t" style="left:1771.6px;top:1294.5px;font-size:17px;color:#4e4e4e;font-weight:400;">DT-PRJ-002</div>
<div class="a" style="left:1737.0px;top:1321.3px;width:24.0px;height:23.5px;background:#c98bdb;border:1.8px solid #9c5cb0"></div>
<div class="t" style="left:1771.6px;top:1324.5px;font-size:17px;color:#4e4e4e;font-weight:400;">DT-PRJ-010</div>
<div class="a" style="left:1737.0px;top:1351.3px;width:24.0px;height:23.5px;background:#e0f7fa;border:1.8px solid #a8c4c8"></div>
<div class="t" style="left:1771.6px;top:1354.5px;font-size:17px;color:#4e4e4e;font-weight:400;">DT-PRJ-025</div>
<div class="a" style="left:1737.0px;top:1381.3px;width:24.0px;height:23.5px;background:#78dae6;border:1.8px solid #3fa9b8"></div>
<div class="t" style="left:1771.6px;top:1384.5px;font-size:17px;color:#4e4e4e;font-weight:400;">DT-PRJ-045</div>
<div class="a" style="left:1737.0px;top:1411.3px;width:24.0px;height:23.5px;background:#81c784;border:1.8px solid #3d8f40"></div>
<div class="t" style="left:1771.6px;top:1414.5px;font-size:17px;color:#4e4e4e;font-weight:400;">DT-PRJ-055</div>
<div class="a" style="left:1737.0px;top:1441.3px;width:24.0px;height:23.5px;background:#ea9595;border:1.8px solid #c06464"></div>
<div class="t" style="left:1771.6px;top:1444.5px;font-size:17px;color:#4e4e4e;font-weight:400;">DT-PRJ-080</div>
<div class="a" style="left:1737.0px;top:1471.3px;width:24.0px;height:23.5px;background:#9d8073;border:1.8px solid #5a3f36"></div>
<div class="t" style="left:1771.6px;top:1474.5px;font-size:17px;color:#4e4e4e;font-weight:400;">DT-PRJ-130</div>
<div class="a" style="left:1737.0px;top:1501.3px;width:24.0px;height:23.5px;background:#ff9385;border:1.8px solid #d05a50"></div>
<div class="t" style="left:1771.6px;top:1504.5px;font-size:17px;color:#4e4e4e;font-weight:400;">DT-PRJ-131</div>
<div class="a" style="left:1737.0px;top:1531.3px;width:24.0px;height:23.5px;background:#57acf2;border:1.8px solid #2a78c0"></div>
<div class="t" style="left:1771.6px;top:1534.5px;font-size:17px;color:#4e4e4e;font-weight:400;">DT-PRJ-132</div>
<div class="panel" style="left:2255.6px;top:1181.3px;width:1420.7px;height:711.4px"></div>
<div class="t" style="left:2279.0px;top:1216.7px;font-size:24px;color:#82809a;font-weight:400;">Spend by cost account</div>
<svg style="left:0;top:0" width="3833" height="1951"><path d="M2769,1543 L2769.00,1304.50 Q2769.00,1298.50 2775.00,1298.57 A244.5,244.5 0 0,1 2966.07,1398.29 Q2969.57,1403.17 2964.64,1406.60 Z" fill="#ec9692" stroke="#fff" stroke-width="2.3" stroke-linejoin="round"/><path d="M2769,1543 L2964.64,1406.60 Q2969.57,1403.17 2972.94,1408.13 A244.5,244.5 0 0,1 2976.17,1413.15 Q2979.29,1418.28 2974.13,1421.34 Z" fill="#ca8fd5" stroke="#fff" stroke-width="2.3" stroke-linejoin="round"/><path d="M2769,1543 L2974.13,1421.34 Q2979.29,1418.28 2982.29,1423.47 A244.5,244.5 0 0,1 3003.10,1613.56 Q3001.29,1619.28 2995.59,1617.41 Z" fill="#b099d8" stroke="#fff" stroke-width="2.3" stroke-linejoin="round"/><path d="M2769,1543 L2995.59,1617.41 Q3001.29,1619.28 2999.35,1624.96 A244.5,244.5 0 0,1 2740.96,1785.89 Q2735.01,1785.13 2735.84,1779.18 Z" fill="#9ba4d8" stroke="#fff" stroke-width="2.3" stroke-linejoin="round"/><path d="M2769,1543 L2735.84,1779.18 Q2735.01,1785.13 2729.08,1784.22 A244.5,244.5 0 0,1 2524.67,1533.95 Q2524.96,1527.95 2530.95,1528.32 Z" fill="#8cc6f6" stroke="#fff" stroke-width="2.3" stroke-linejoin="round"/><path d="M2769,1543 L2530.95,1528.32 Q2524.96,1527.95 2525.41,1521.97 A244.5,244.5 0 0,1 2538.44,1461.63 Q2540.50,1456.00 2546.11,1458.14 Z" fill="#7dd0f7" stroke="#fff" stroke-width="2.3" stroke-linejoin="round"/><path d="M2769,1543 L2546.11,1458.14 Q2540.50,1456.00 2542.71,1450.42 A244.5,244.5 0 0,1 2558.94,1417.89 Q2562.07,1412.77 2567.15,1415.97 Z" fill="#7cdae6" stroke="#fff" stroke-width="2.3" stroke-linejoin="round"/><path d="M2769,1543 L2567.15,1415.97 Q2562.07,1412.77 2565.33,1407.73 A244.5,244.5 0 0,1 2763.00,1298.57 Q2769.00,1298.50 2769.00,1304.50 Z" fill="#7cc7c0" stroke="#fff" stroke-width="2.3" stroke-linejoin="round"/></svg>
<div class="t" style="left:2327.6px;width:1000px;text-align:center;top:1417.8px;font-size:23px;color:#555;font-weight:400;">15.31%</div>
<div class="t" style="left:2375.0px;width:1000px;text-align:center;top:1461.3px;font-size:23px;color:#555;font-weight:400;">1.17%</div>
<div class="t" style="left:2395.6px;width:1000px;text-align:center;top:1516.4px;font-size:23px;color:#555;font-weight:400;">13.57%</div>
<div class="t" style="left:2336.0px;width:1000px;text-align:center;top:1637.8px;font-size:23px;color:#555;font-weight:400;">22.17%</div>
<div class="t" style="left:2170.0px;width:1000px;text-align:center;top:1611.1px;font-size:23px;color:#555;font-weight:400;">23.76%</div>
<div class="t" style="left:2143.8px;width:1000px;text-align:center;top:1504.1px;font-size:23px;color:#555;font-weight:400;">4.81%</div>
<div class="t" style="left:2155.0px;width:1000px;text-align:center;top:1473.5px;font-size:23px;color:#555;font-weight:400;">3.15%</div>
<div class="t" style="left:2206.8px;width:1000px;text-align:center;top:1418.4px;font-size:23px;color:#555;font-weight:400;">16.06%</div>
<div class="a" style="left:3310.0px;top:1291.2px;width:24.0px;height:23.5px;background:#ec9692;border:1.8px solid #b05a5a"></div>
<div class="t" style="left:3345.0px;top:1293.5px;font-size:18px;color:#4e4e4e;font-weight:400;">Direct Costs</div>
<div class="a" style="left:3310.0px;top:1321.2px;width:24.0px;height:23.5px;background:#ca8fd5;border:1.8px solid #8d4f9a"></div>
<div class="t" style="left:3345.0px;top:1323.5px;font-size:18px;color:#4e4e4e;font-weight:400;">Equipment</div>
<div class="a" style="left:3310.0px;top:1351.2px;width:24.0px;height:23.5px;background:#b099d8;border:1.8px solid #6d5a96"></div>
<div class="t" style="left:3345.0px;top:1353.5px;font-size:18px;color:#4e4e4e;font-weight:400;">Hosting</div>
<div class="a" style="left:3310.0px;top:1381.2px;width:24.0px;height:23.5px;background:#9ba4d8;border:1.8px solid #5a6496"></div>
<div class="t" style="left:3345.0px;top:1383.5px;font-size:18px;color:#4e4e4e;font-weight:400;">Internal Labor</div>
<div class="a" style="left:3310.0px;top:1411.2px;width:24.0px;height:23.5px;background:#8cc6f6;border:1.8px solid #4f88b8"></div>
<div class="t" style="left:3345.0px;top:1413.5px;font-size:18px;color:#4e4e4e;font-weight:400;">Licenses</div>
<div class="a" style="left:3310.0px;top:1441.2px;width:24.0px;height:23.5px;background:#7dd0f7;border:1.8px solid #3b8db5"></div>
<div class="t" style="left:3345.0px;top:1443.5px;font-size:18px;color:#4e4e4e;font-weight:400;">Maintenance</div>
<div class="a" style="left:3310.0px;top:1471.2px;width:24.0px;height:23.5px;background:#7cdae6;border:1.8px solid #3c9aa6"></div>
<div class="t" style="left:3345.0px;top:1473.5px;font-size:18px;color:#4e4e4e;font-weight:400;">Other Expenses</div>
<div class="a" style="left:3310.0px;top:1501.2px;width:24.0px;height:23.5px;background:#7cc7c0;border:1.8px solid #3b877f"></div>
<div class="t" style="left:3345.0px;top:1503.5px;font-size:18px;color:#4e4e4e;font-weight:400;">Subcontracting</div>
<div class="a" style="left:3760.3px;top:103.0px;width:60.4px;height:717.0px;background:#fff;border-radius:30px;box-shadow:0 0 4px rgba(0,0,0,.18)"></div>
<svg style="left:0;top:0" width="3833" height="1951"><g stroke="#6e7399" stroke-width="3"><path d="M3784.3,149.5V176.6M3778.4,168.8H3790.3M3799.5,149.5V176.6M3793.6,157H3805.6"/></g><path d="M3769.5,205.7H3815.6M3769.5,472.8H3815.6" stroke="#e3e3e3" stroke-width="1.8"/><path d="M3778,234 H3802 L3808.5,240.5 V263.5 Q3808.5,265.8 3806.2,265.8 H3778 Q3775.8,265.8 3775.8,263.5 V236.2 Q3775.8,234 3778,234Z" fill="#c4c4c4"/><rect x="3779.6" y="237" width="18.4" height="7.5" fill="#fff"/><circle cx="3792" cy="257" r="5.3" fill="#fff"/><path d="M3776,301.5 Q3784,299 3792,303 V325.6 Q3784,322 3776,324.5Z" fill="#6e7399"/><path d="M3793.3,304 Q3800.5,300.5 3807.3,302.3 V323.5 Q3800.5,321.8 3793.3,324.6Z" fill="#fff" stroke="#6e7399" stroke-width="2.6" stroke-linejoin="round"/><path d="M3797,308.8Q3800.5,307.3 3804,307.8M3797,312.8Q3800.5,311.3 3804,311.8M3797,316.8Q3800.5,315.3 3804,315.8M3797,320.8Q3800.5,319.3 3804,319.8" stroke="#6e7399" stroke-width="1.7" fill="none"/><path d="M3776,358.7 L3806.8,371.2 L3776,384.7 V376 L3791,371.2 L3776,366.5Z" fill="#6e7399"/><rect x="3778" y="416.5" width="28" height="19" rx="3" fill="none" stroke="#6e7399" stroke-width="2.6"/><rect x="3786" y="435.5" width="12" height="6.5" fill="#6e7399"/><path d="M3783,423.5H3801M3783,429H3801" stroke="#6e7399" stroke-width="1.8"/><path d="M3795,420.5V426.5M3787.5,426V432" stroke="#6e7399" stroke-width="1.8"/><circle cx="3791.7" cy="512.5" r="23.8" fill="#c5cae9"/><circle cx="3787.7" cy="506" r="4.4" fill="#d6559a"/><circle cx="3798.6" cy="508.7" r="3.7" fill="#d6559a"/><path d="M3776.8,523.2 V519.5 Q3777,514.6 3783.5,514.6 H3789.7 Q3793,514.8 3793,519.5 V523.2Z" fill="#d6559a"/><path d="M3790.7,523.2 V519.5 Q3791,515 3795.5,515 H3802.5 Q3807,515.2 3807,519.5 V523.2Z" fill="#d6559a" stroke="#c5cae9" stroke-width="1.6"/><path d="M3775,558.5 V571.8 H3789 Z" fill="#6e7399"/><path d="M3781.5,566.5 Q3796,552 3808,571" fill="none" stroke="#6e7399" stroke-width="4"/><circle cx="3779.8" cy="548.5" r="9" fill="#c8c8c8"/><path d="M3776,547 L3779.8,550.8 L3783.6,547" fill="none" stroke="#555" stroke-width="1.6"/><path d="M3808.5,607.7 V622.6 H3794.5 Z" fill="#6e7399"/><path d="M3802,614.5 Q3788,601 3776.5,621.6" fill="none" stroke="#6e7399" stroke-width="4"/><path d="M3789.7,653.7 H3804.5 Q3806.5,653.7 3806.5,655.7 V661.5 M3776.8,663.5 V670.2 Q3776.8,672.2 3778.8,672.2 H3790.7" fill="none" stroke="#6e7399" stroke-width="2.8"/><path d="M3807.20,672.73 L3808.95,673.56 L3807.09,676.79 L3805.49,675.68 L3803.70,676.72 L3803.86,678.65 L3800.14,678.65 L3800.30,676.72 L3798.51,675.68 L3796.91,676.79 L3795.05,673.56 L3796.80,672.73 L3796.80,670.67 L3795.05,669.84 L3796.91,666.61 L3798.51,667.72 L3800.30,666.68 L3800.14,664.75 L3803.86,664.75 L3803.70,666.68 L3805.49,667.72 L3807.09,666.61 L3808.95,669.84 L3807.20,670.67ZM3804.30,671.70 A2.3,2.3 0 1,0 3799.70,671.70 A2.3,2.3 0 1,0 3804.30,671.70Z" fill="#6e7399" fill-rule="evenodd"/><circle cx="3777.4" cy="652" r="9" fill="#c8c8c8"/><path d="M3772.5,647.5 Q3777.4,645.5 3782.3,647.5 V651.5 Q3782,656 3777.4,658 Q3772.8,656 3772.5,651.5Z" fill="#555"/><path d="M3778.8,710 V730.5 Q3778.8,732.2 3780.5,732.2 H3804 Q3805.7,732.2 3805.7,730.5 V707 Q3805.7,705.2 3804,705.2 H3788" fill="none" stroke="#6e7399" stroke-width="2.8"/><rect x="3788" y="704" width="18.5" height="7.5" fill="#6e7399"/><rect x="3799.2" y="694.5" width="3" height="10" fill="#6e7399"/><path d="M3783.5,717H3787M3790.5,717H3794M3797.5,717H3801" stroke="#6e7399" stroke-width="2.8"/><circle cx="3779.8" cy="701.6" r="9" fill="#c8c8c8"/><path d="M3776,700 L3779.8,703.8 L3783.6,700" fill="none" stroke="#555" stroke-width="1.6"/></svg>
<div class="a" style="left:3766px;top:1881px;width:54px;height:54px;border-radius:27px;background:#6b7bdb;box-shadow:0 2px 6px rgba(0,0,0,.28)"></div>
<svg style="left:3766px;top:1881px" width="54" height="54"><circle cx="27" cy="15.5" r="3.6" fill="#fff"/><circle cx="14" cy="27" r="3.5" fill="#fff"/><circle cx="40" cy="27" r="3.5" fill="#fff"/><rect x="15" y="16.5" width="24" height="24.3" rx="3.5" fill="#fff"/><circle cx="22.7" cy="27" r="2" fill="#6b7bdb"/><circle cx="31.7" cy="27" r="2" fill="#6b7bdb"/><rect x="21.2" y="32" width="11.8" height="2.5" fill="#6b7bdb"/></svg></div></body></html>
